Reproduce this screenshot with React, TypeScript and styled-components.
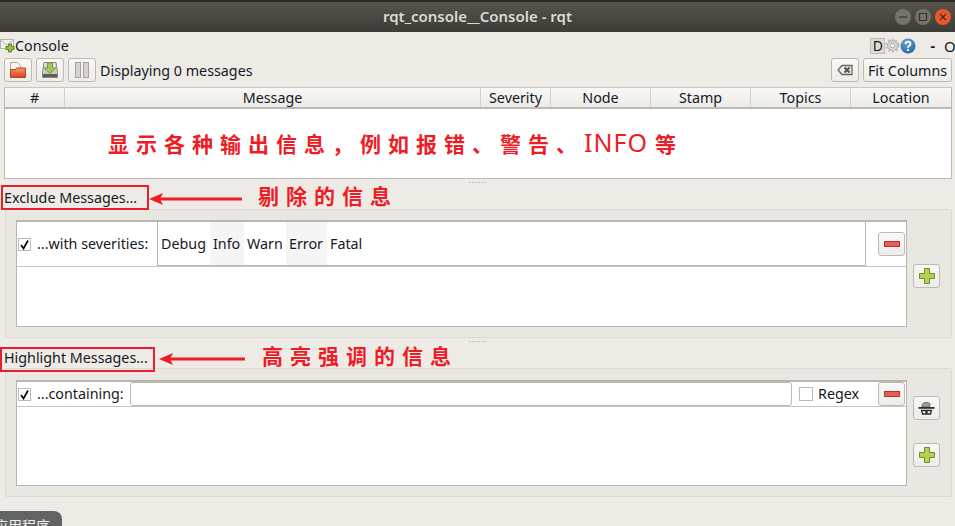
import styled, { createGlobalStyle } from 'styled-components';

const GlobalStyle = createGlobalStyle`
  html, body {
    margin: 0;
    padding: 0;
    background: #edebe6;
  }

  * {
    box-sizing: border-box;
  }
`;

const Page = styled.div`
  position: relative;
  width: 955px;
  height: 526px;
  overflow: hidden;
  background: #eeebe7;
  color: #15191e;
  font-family: "Noto Sans", "Noto Sans CJK SC", sans-serif;
  font-size: 14.3px;
  display: flex;
  flex-direction: column;
`;

const TitleBar = styled.div`
  height: 32px;
  flex: none;
  border-top: 2px solid #2b2a27;
  background: linear-gradient(#57544b, #3c3b36);
  display: flex;
  align-items: center;
  justify-content: center;
  position: relative;
  padding-bottom: 2px;
  color: #dcd9d0;
  font-weight: 600;
  font-size: 15px;
`;

const WindowButtons = styled.div`
  position: absolute;
  right: 4px;
  top: 7px;
  display: flex;
  gap: 4px;
`;

const WindowButton = styled.div<{ $close?: boolean }>`
  width: 16px;
  height: 16px;
  border-radius: 50%;
  background: ${(p) => (p.$close ? '#e9562a' : '#74726b')};
  display: flex;
  align-items: center;
  justify-content: center;
`;

const ConsoleBar = styled.div`
  height: 26px;
  flex: none;
  display: flex;
  align-items: center;
  padding-top: 1px;
`;

const ConsoleTitle = styled.span`
  margin-left: 0;
`;

const ConsoleTools = styled.div`
  margin-left: auto;
  display: flex;
  align-items: center;
`;

const DockBadge = styled.div`
  width: 15px;
  height: 16px;
  background: #dedbd5;
  border: 1px solid #c0bdb6;
  display: flex;
  align-items: center;
  justify-content: center;
  font-size: 14px;
`;

const DockDash = styled.span`
  margin-left: 14px;
  font-weight: 700;
`;

const DockLetter = styled.span`
  margin-left: 9px;
  width: 11px;
  overflow: hidden;
  font-size: 15px;
`;

const Toolbar = styled.div`
  height: 24px;
  flex: none;
  margin: 0 3px 0 4px;
  display: flex;
  align-items: center;
  gap: 4px;
`;

const ToolButton = styled.div<{ $wide?: boolean }>`
  width: ${(p) => (p.$wide ? '89px' : '28px')};
  height: 24px;
  flex: none;
  border: 1px solid #bdbab3;
  border-radius: 3px;
  background: linear-gradient(#f9f8f6, #eeece8);
  display: flex;
  align-items: center;
  justify-content: center;
  white-space: nowrap;
`;

const Status = styled.span`
  flex: 1;
`;

const Table = styled.div`
  margin: 5px 3px 0 4px;
  height: 92px;
  flex: none;
  background: #fff;
  border: 1px solid #bcb9b2;
  border-top-color: #c9c6c0;
`;

const TableHead = styled.div`
  display: grid;
  grid-template-columns: 59px 416px 70px 100px 100px 100px 1fr;
  height: 21px;
  border-bottom: 2px solid #bcb9b2;
  background: linear-gradient(#f8f7f5, #ecebe7);
`;

const HeadCell = styled.div`
  display: flex;
  align-items: center;
  justify-content: center;
  border-left: 1px solid #d3d0ca;
  line-height: 16px;

  &:first-child {
    border-left: none;
  }
`;

const Splitter = styled.div`
  height: 6px;
  flex: none;
  display: flex;
  align-items: center;
  justify-content: center;
  gap: 1px;
`;

const Dot = styled.i`
  width: 2px;
  height: 1px;
  background: #c3c0b9;
`;

const GroupTitle = styled.div<{ $drop?: number }>`
  height: 24px;
  flex: none;
  padding: ${(p) => p.$drop ?? 1}px 0 0 4px;
  display: flex;
  align-items: center;
`;

const GroupBox = styled.div<{ $inset: number }>`
  height: 129px;
  flex: none;
  margin: 0 3px 0 5px;
  padding: ${(p) => p.$inset}px 11px 10px 10px;
  border: 1px solid #dcd9d3;
  border-radius: 2px;
  background: #e9e7e2;
  display: flex;
  gap: 6px;
`;

const FilterList = styled.div`
  flex: 1;
  background: #fff;
  border: 1px solid #b9b6af;
  border-top-width: 2px;
  display: flex;
  flex-direction: column;
`;

const FilterRow = styled.div<{ $height: number }>`
  height: ${(p) => p.$height}px;
  flex: none;
  display: flex;
  align-items: center;
  padding-right: 1px;
  border-bottom: 1px solid #c9c6c0;
`;

const Check = styled.div`
  width: 13px;
  height: 13px;
  flex: none;
  margin: 0 6px 0 1px;
  background: #fff;
  border: 1px solid #bdbab3;
  display: flex;
  align-items: center;
  justify-content: center;
  color: #111;
`;

const RowLabel = styled.span<{ $width: number }>`
  width: ${(p) => p.$width}px;
  flex: none;
  padding-bottom: 1px;
  white-space: nowrap;
`;

const SeverityList = styled.div`
  width: 708px;
  height: 100%;
  flex: none;
  border-left: 1px solid #b9b6af;
  border-bottom: 1px solid #b9b6af;
  padding-left: 0;
  display: flex;
`;

const Severity = styled.div<{ $alt?: boolean; $width: number }>`
  width: ${(p) => p.$width}px;
  flex: none;
  background: ${(p) => (p.$alt ? '#f5f5f5' : '#fff')};
  display: flex;
  align-items: center;
  padding: 0 0 1px 3px;
`;

const RemoveCell = styled.div`
  flex: 1;
  height: 100%;
  display: flex;
  align-items: center;
  justify-content: flex-end;
  border-left: 1px solid #b9b6af;
`;

const SquareButton = styled.div`
  width: 27px;
  height: 24px;
  flex: none;
  border: 1px solid #bdbab3;
  border-radius: 3px;
  background: linear-gradient(#f9f8f6, #eeece8);
  display: flex;
  align-items: center;
  justify-content: center;
`;

const Input = styled.div`
  width: 662px;
  height: 24px;
  flex: none;
  background: #fff;
  border: 1px solid #bdbab3;
  border-radius: 3px;
`;

const RegexCheck = styled(Check)`
  width: 14px;
  height: 14px;
  margin: 0 5px 0 7px;
`;

const RegexLabel = styled.span`
  flex: 1;
  padding-bottom: 1px;
`;

const SideButtons = styled.div<{ $top: number }>`
  flex: none;
  padding-top: ${(p) => p.$top}px;
  display: flex;
  flex-direction: column;
  gap: 23px;
`;

const Overlay = styled.div<{ $x: number; $y: number }>`
  position: absolute;
  left: ${(p) => p.$x}px;
  top: ${(p) => p.$y}px;
`;

const RedNote = styled(Overlay)`
  color: #ee1c25;
  font-family: "Noto Sans CJK SC", "Noto Sans", sans-serif;
  font-weight: 700;
  font-size: 21px;
  line-height: 26px;
  letter-spacing: 7px;
  white-space: nowrap;
`;

const LatinNote = styled.span`
  font-family: "Noto Sans", sans-serif;
  font-weight: 400;
  font-size: 25px;
  letter-spacing: 1px;
  margin-right: 7px;
`;

const RedBox = styled(Overlay)<{ $width: number }>`
  width: ${(p) => p.$width}px;
  height: 25px;
  border: 2px solid #e8202c;
`;

const Launcher = styled.div`
  position: absolute;
  left: 0;
  bottom: 0;
  width: 62px;
  height: 15px;
  overflow: hidden;
  background: #626463;
  border-top-right-radius: 8px;
  color: #f2f2f2;
  font-size: 14px;
  line-height: 20px;
  white-space: nowrap;
`;

const LauncherText = styled.span`
  display: block;
  margin: 5px 0 0 -6px;
`;

const COLUMNS = ['#', 'Message', 'Severity', 'Node', 'Stamp', 'Topics', 'Location'];

const SEVERITIES = [
  { name: 'Debug', width: 52, alt: false },
  { name: 'Info', width: 34, alt: true },
  { name: 'Warn', width: 42, alt: false },
  { name: 'Error', width: 41, alt: true },
  { name: 'Fatal', width: 40, alt: false },
];

const CheckMark = () => (
  <svg width="11" height="11" viewBox="0 0 11 11">
    <path d="M2 6l2.500 3.500L9 1.500" fill="none" stroke="#111" strokeWidth="1.800" />
  </svg>
);

const MailPlusIcon = () => (
  <svg width="15" height="15" viewBox="0 0 15 15">
    <rect x="0.500" y="1.500" width="13" height="9" fill="#f1f0ee" stroke="#b5b3ae" />
    <path d="M0.500 2l6.500 5 6.500-5" fill="none" stroke="#b5b3ae" />
    <path d="M8.500 6h3v2.500H14v3h-2.500V14h-3v-2.500H6v-3h2.500z" fill="#9dc03f" stroke="#55802a" />
  </svg>
);

const FolderIcon = () => (
  <svg width="18" height="18" viewBox="0 0 18 18">
    <defs>
      <linearGradient id="folderFront" x1="0" y1="0" x2="0" y2="1">
        <stop offset="0" stopColor="#f59a6e" />
        <stop offset="1" stopColor="#d8401c" />
      </linearGradient>
    </defs>
    <path d="M1.500 9V1.500h7l3 3v3" fill="#f6f5f2" stroke="#a9a7a2" />
    <path d="M1.500 8.500h5l1-1.500h9v9.500h-15z" fill="url(#folderFront)" stroke="#b8431f" />
  </svg>
);

const DiskIcon = () => (
  <svg width="18" height="18" viewBox="0 0 18 18">
    <defs>
      <linearGradient id="diskBody" x1="0" y1="0" x2="0" y2="1">
        <stop offset="0" stopColor="#e8e7e3" />
        <stop offset="1" stopColor="#bdbbb6" />
      </linearGradient>
    </defs>
    <path d="M3 1.500h12l1.500 10v5h-15v-5z" fill="url(#diskBody)" stroke="#8a8883" />
    <rect x="2" y="13" width="14" height="3" fill="#5f5d58" />
    <path d="M6.500 2h5v5H15l-6 5.500L3 7h3.500z" fill="#a4c65c" stroke="#7a9c40" />
  </svg>
);

const PauseIcon = () => (
  <svg width="16" height="16" viewBox="0 0 16 16">
    <rect x="1.500" y="0.500" width="5" height="15" fill="#d4d3ce" stroke="#a5a39d" />
    <rect x="9.500" y="0.500" width="5" height="15" fill="#d4d3ce" stroke="#a5a39d" />
  </svg>
);

const ClearIcon = () => (
  <svg width="16" height="12" viewBox="0 0 16 12">
    <path d="M5 1.500h10v9H5L1 6z" fill="#ecebe8" stroke="#66645f" strokeWidth="1.300" />
    <path d="M7.500 3.500l5 5m0-5l-5 5" stroke="#55534e" strokeWidth="2" />
  </svg>
);

const GearIcon = () => (
  <svg width="15" height="15" viewBox="0 0 15 15">
    <circle cx="7.500" cy="7.500" r="5" fill="#dddbd6" stroke="#aaa8a3" />
    <circle cx="7.500" cy="7.500" r="6.300" fill="none" stroke="#bcbab5" strokeWidth="1.600" strokeDasharray="2 2" />
    <circle cx="7.500" cy="7.500" r="2.300" fill="#f4f3f1" stroke="#aaa8a3" />
  </svg>
);

const HelpIcon = () => (
  <svg width="16" height="16" viewBox="0 0 16 16">
    <defs>
      <radialGradient id="helpFill" cx="0.4" cy="0.3" r="0.8">
        <stop offset="0" stopColor="#6ea4d6" />
        <stop offset="1" stopColor="#22609f" />
      </radialGradient>
    </defs>
    <circle cx="8" cy="8" r="7.500" fill="url(#helpFill)" />
    <path d="M5.500 6c0-3.300 5-3.300 5 0 0 1.800-2.500 1.800-2.500 3.800" fill="none" stroke="#fff" strokeWidth="1.800" />
    <rect x="7.100" y="11" width="1.800" height="2" fill="#fff" />
  </svg>
);

const MinusIcon = () => (
  <svg width="16" height="6" viewBox="0 0 16 6">
    <rect x="0.500" y="0.500" width="15" height="5" fill="#e0605c" stroke="#b73331" />
  </svg>
);

const PlusIcon = () => (
  <svg width="16" height="16" viewBox="0 0 16 16">
    <path d="M5.500 0.500h5v5h5v5h-5v5h-5v-5h-5v-5h5z" fill="#b4d151" stroke="#6c8f2c" />
  </svg>
);

const HatIcon = () => (
  <svg width="17" height="13" viewBox="0 0 17 13">
    <path d="M4 5C4 2 5 .5 8 .5c2 0 4 .5 4 1.500l-.5 3z" fill="#a09f9b" stroke="#6a6965" />
    <rect x="0.500" y="5" width="16" height="1.800" fill="#2f2e2b" />
    <path d="M3.500 8.500h4.500v3.500H4.500zM9 8.500h4.500l-1 3.500H9z" fill="none" stroke="#2f2e2b" strokeWidth="1.300" />
  </svg>
);

const WinGlyph = ({ d }: { d: string }) => (
  <svg width="10" height="10" viewBox="0 0 10 10">
    <path d={d} fill="none" stroke="#33322e" strokeWidth="1.200" />
  </svg>
);

// the hand drawn red arrows from the annotated screenshot
const RedArrow = ({ width }: { width: number }) => (
  <svg width={width} height="14" viewBox={`0 0 ${width} 14`}>
    <path d={`M9 7H${width - 1}`} stroke="#ee1c25" strokeWidth="3" strokeLinecap="round" />
    <path d="M0 7l14-6-3 6 3 6z" fill="#ee1c25" />
  </svg>
);

const Dots = () => (
  <Splitter>
    {[0, 1, 2, 3, 4, 5].map((i) => <Dot key={i} />)}
  </Splitter>
);

const App = () => {
  return (
    <Page>
      <GlobalStyle />
      <TitleBar>
        rqt_console__Console - rqt
        <WindowButtons>
          <WindowButton><WinGlyph d="M1 5h8" /></WindowButton>
          <WindowButton><WinGlyph d="M1.500 1.500h7v7h-7z" /></WindowButton>
          <WindowButton $close><WinGlyph d="M2 2l6 6m0-6l-6 6" /></WindowButton>
        </WindowButtons>
      </TitleBar>

      <ConsoleBar>
        <MailPlusIcon />
        <ConsoleTitle>Console</ConsoleTitle>
        <ConsoleTools>
          <DockBadge>D</DockBadge>
          <GearIcon />
          <HelpIcon />
          <DockDash>-</DockDash>
          <DockLetter>O</DockLetter>
        </ConsoleTools>
      </ConsoleBar>

      <Toolbar>
        <ToolButton><FolderIcon /></ToolButton>
        <ToolButton><DiskIcon /></ToolButton>
        <ToolButton><PauseIcon /></ToolButton>
        <Status>Displaying 0 messages</Status>
        <ToolButton><ClearIcon /></ToolButton>
        <ToolButton $wide>Fit Columns</ToolButton>
      </Toolbar>

      <Table>
        <TableHead>
          {COLUMNS.map((c) => <HeadCell key={c}>{c}</HeadCell>)}
        </TableHead>
      </Table>

      <Dots />
      <GroupTitle>Exclude Messages...</GroupTitle>
      <GroupBox $inset={10}>
        <FilterList>
          <FilterRow $height={45}>
            <Check><CheckMark /></Check>
            <RowLabel $width={120}>...with severities:</RowLabel>
            <SeverityList>
              {SEVERITIES.map((s) => (
                <Severity key={s.name} $alt={s.alt} $width={s.width}>{s.name}</Severity>
              ))}
            </SeverityList>
            <RemoveCell>
              <SquareButton><MinusIcon /></SquareButton>
            </RemoveCell>
          </FilterRow>
        </FilterList>
        <SideButtons $top={44}>
          <SquareButton><PlusIcon /></SquareButton>
        </SideButtons>
      </GroupBox>

      <Dots />
      <GroupTitle $drop={3}>Highlight Messages...</GroupTitle>
      <GroupBox $inset={11}>
        <FilterList>
          <FilterRow $height={25}>
            <Check><CheckMark /></Check>
            <RowLabel $width={93}>...containing:</RowLabel>
            <Input />
            <RegexCheck />
            <RegexLabel>Regex</RegexLabel>
            <SquareButton><MinusIcon /></SquareButton>
          </FilterRow>
        </FilterList>
        <SideButtons $top={16}>
          <SquareButton><HatIcon /></SquareButton>
          <SquareButton><PlusIcon /></SquareButton>
        </SideButtons>
      </GroupBox>

      <RedNote $x={108} $y={129}>显示各种输出信息，例如报错、警告、<LatinNote>INFO</LatinNote>等</RedNote>
      <RedBox $x={1} $y={185} $width={148} />
      <Overlay $x={149} $y={191}><RedArrow width={93} /></Overlay>
      <RedNote $x={258} $y={182}>剔除的信息</RedNote>
      <RedBox $x={0} $y={347} $width={155} />
      <Overlay $x={159} $y={351}><RedArrow width={86} /></Overlay>
      <RedNote $x={262} $y={342}>高亮强调的信息</RedNote>

      <Launcher><LauncherText>应用程序</LauncherText></Launcher>
    </Page>
  );
};

export default App;
